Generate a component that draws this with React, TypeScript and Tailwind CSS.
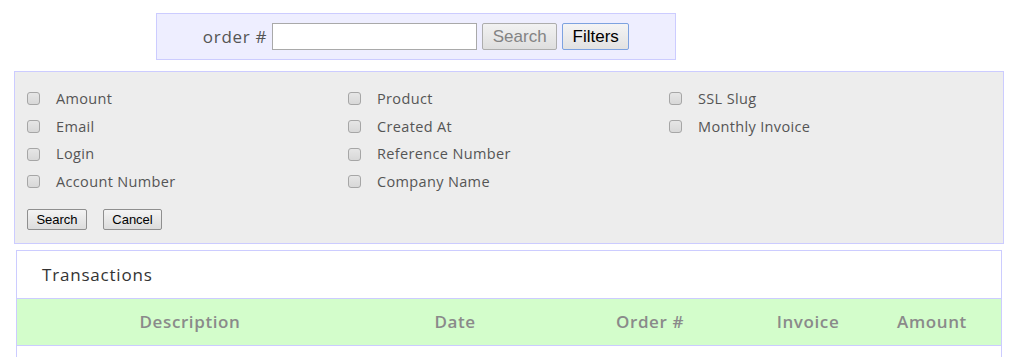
import React from 'react';

const columns = [
  ['Amount', 'Email', 'Login', 'Account Number'],
  ['Product', 'Created At', 'Reference Number', 'Company Name'],
  ['SSL Slug', 'Monthly Invoice'],
];

const headers = [
  { label: 'Description', w: 'w-[346px]' },
  { label: 'Date', w: 'w-[184px]' },
  { label: 'Order #', w: 'w-[206px]' },
  { label: 'Invoice', w: 'w-[110px]' },
  { label: 'Amount', w: 'w-[138px]' },
];

function Check({ label }: { label: string }) {
  return (
    <label className="flex items-center h-[27.67px] text-[14.5px] tracking-[0.35px] text-[#555]">
      <span className="w-[13px] h-[13px] rounded-[3px] border border-[#a6a6a6] bg-gradient-to-b from-[#e6e6e6] to-[#d8d8d8] shrink-0" />
      <span className="ml-[16px]">{label}</span>
    </label>
  );
}

export default function App() {
  return (
    <div className="w-[1017px] h-[357px] overflow-hidden bg-white font-['Open_Sans',sans-serif]">
      {/* order search */}
      <div className="ml-[156px] mt-[13px] w-[520px] h-[47px] border border-[#ccccff] bg-[#eeeeff] flex items-center justify-center gap-[5px]">
        <span className="text-[17px] tracking-[0.7px] text-[#555]">order #</span>
        <input className="w-[205px] h-[27px] border border-[#a9a9a9] bg-white" />
        <button className="h-[27px] w-[75px] border border-[#adadad] rounded-[2px] bg-gradient-to-b from-[#f2f2f2] to-[#dedede] text-[17px] text-[#838383] font-['Liberation_Sans',sans-serif]">
          Search
        </button>
        <button className="h-[27px] w-[67px] border border-[#7da2e0] rounded-[2px] bg-gradient-to-b from-[#f4f4f4] to-[#e2e2e2] text-[17px] text-black font-['Liberation_Sans',sans-serif]">
          Filters
        </button>
      </div>

      {/* filters */}
      <div className="ml-[14px] mt-[11px] w-[990px] h-[173px] border border-[#ccccff] bg-[#ededed] pl-[12px] pt-[13px]">
        <div className="flex">
          {columns.map((col, i) => (
            <div key={i} className="w-[321px]">
              {col.map(l => <Check key={l} label={l} />)}
            </div>
          ))}
        </div>
        <div className="flex gap-[16px] mt-[13px] font-['Liberation_Sans',sans-serif] text-[13px]">
          <button className="w-[60px] h-[21px] border border-[#8f8f8f] rounded-[2px] bg-gradient-to-b from-[#f4f4f4] to-[#dcdcdc] text-black">Search</button>
          <button className="w-[59px] h-[21px] border border-[#8f8f8f] rounded-[2px] bg-gradient-to-b from-[#f4f4f4] to-[#dcdcdc] text-black">Cancel</button>
        </div>
      </div>

      {/* transactions */}
      <div className="ml-[16px] mt-[6px] w-[986px] border border-[#ccccff] bg-white">
        <div className="h-[47px] flex items-center pl-[25px] text-[17px] tracking-[0.8px] text-[#333]">Transactions</div>
        <div className="flex h-[48px] border-y border-[#ccccff] bg-[#d3fdcb]">
          {headers.map(h => (
            <div key={h.label} className={`${h.w} flex items-center justify-center text-[17px] font-semibold tracking-[0.6px] text-[#8a8a8a]`}>
              {h.label}
            </div>
          ))}
        </div>
        <div className="h-[40px]" />
      </div>
    </div>
  );
}
